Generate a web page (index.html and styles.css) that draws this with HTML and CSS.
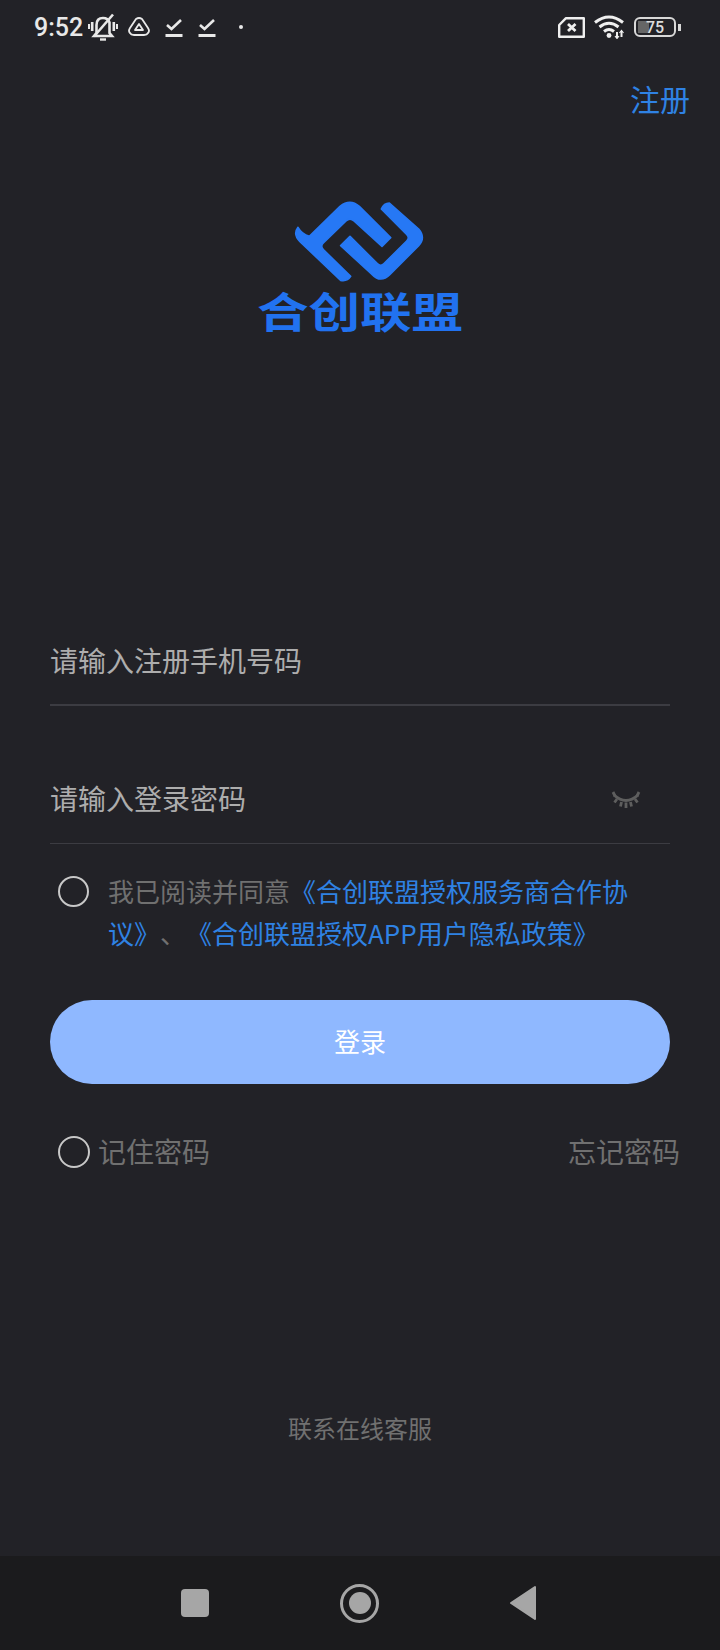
FILE: index.html
```html
<!DOCTYPE html>
<html lang="zh-CN">
<head>
    <meta charset="UTF-8">
    <meta name="viewport" content="width=device-width, initial-scale=1.0">
    <title>合创联盟</title>
    <link rel="stylesheet" href="styles.css">
</head>
<body>
    <div class="app">
        <div class="status-bar">
            <div class="status-left">
                <span class="time">9:52</span>
                <svg class="icon-bell" width="30" height="28" viewBox="0 0 30 28" fill="none" stroke="#e8e8e8" stroke-width="2.6">
                    <path d="M8.5 20 L8.5 12 Q8.5 5 15 5 Q20 5 21.5 9.5 L21.5 20 L24 23 L6 23 Z"/>
                    <path d="M12 26.5 L18 26.5" stroke-width="2.4"/>
                    <path d="M6 23.5 L25 1.5"/>
                    <path d="M4.2 9 V18 M25.8 9 V18" stroke-width="2.6"/>
                    <path d="M1 11 V16 M29 11 V16" stroke-width="2"/>
                </svg>
                <svg class="icon-tri" width="22" height="20" viewBox="0 0 22 20" fill="none" stroke="#e8e8e8" stroke-width="1.8" stroke-linejoin="round">
                    <path d="M8 2 Q11 0 14 2 L20 11 Q22 14 20 16 Q19 18 16 18 H6 Q3 18 2 16 Q0 14 2 11 Z"/>
                    <path d="M11 7 L15 13 H7 Z"/>
                </svg>
                <svg class="icon-check" width="18" height="20" viewBox="0 0 18 20" fill="none" stroke="#e8e8e8" stroke-width="2.6">
                    <path d="M2 8 L6.5 12 L16 3"/>
                    <path d="M0.5 18.5 H17.5" stroke-width="3"/>
                </svg>
                <svg class="icon-check" width="18" height="20" viewBox="0 0 18 20" fill="none" stroke="#e8e8e8" stroke-width="2.6">
                    <path d="M2 8 L6.5 12 L16 3"/>
                    <path d="M0.5 18.5 H17.5" stroke-width="3"/>
                </svg>
                <span class="status-dot"></span>
            </div>
            <div class="status-right">
                <svg width="27" height="21" viewBox="0 0 27 21" fill="none" stroke="#efefef" stroke-width="2.4" stroke-linejoin="round">
                    <path d="M8 1.2 H25.8 V19.8 H1.2 V8 Z"/>
                    <path d="M10 7 L17.5 14 M17.5 7 L10 14" stroke-width="2.8"/>
                </svg>
                <svg width="31" height="24" viewBox="0 0 31 24" fill="none" stroke="#efefef" stroke-width="3">
                    <path d="M1 7.5 Q15 -3.5 29 7.5"/>
                    <path d="M5.5 12 Q15 4.5 24.5 12"/>
                    <path d="M10 16.5 Q15 12.5 20 16.5"/>
                    <circle cx="15" cy="20.5" r="2.4" fill="#efefef" stroke="none"/>
                    <path d="M23 17 V23 M27.5 16 V22" stroke-width="2"/>
                    <path d="M21 21 L23 23.5 L25 21 M25.5 18 L27.5 15.5 L29.5 18" stroke-width="1.2"/>
                </svg>
                <div class="battery">
                    <div class="battery-body">
                        <span class="battery-fill"></span>
                        <span class="battery-num">75</span>
                    </div>
                    <span class="battery-tip"></span>
                </div>
            </div>
        </div>

        <div class="top-link"><a href="#">注册</a></div>

        <div class="logo">
            <svg width="140" height="90" viewBox="0 0 420 270" fill="#2678f5" stroke="#2678f5" stroke-width="5" stroke-linejoin="round">
                <path d="M24 97 Q35 117 58 124 L150 34 Q180 10 208 34 L302 128 L276 154 L192 78 Q180 66 168 78 L100 144 Q90 154 100 164 L182 244 Q172 260 152 256 L30 140 Q8 118 24 97 Z"/>
                <path d="M152 152 L180 124 L262 206 Q272 216 282 206 L350 138 Q360 128 350 118 L274 42 Q282 24 298 24 L386 102 Q408 128 386 152 L300 238 Q272 266 246 238 Z"/>
            </svg>
            <div class="logo-name">合创联盟</div>
        </div>

        <div class="form">
            <div class="field field-phone">
                <span>请输入注册手机号码</span>
            </div>
            <div class="field field-pass">
                <span>请输入登录密码</span>
                <svg class="eye" width="30" height="18" viewBox="0 0 30 18" fill="none" stroke="#5e5e5e" stroke-width="3">
                    <path d="M3 4 Q15 15 27 4"/>
                    <path d="M2 1 L4 5 M28 1 L26 5 M6 8 L3.5 11.5 M24 8 L26.5 11.5 M10.5 11 L9.5 15.5 M19.5 11 L20.5 15.5 M15 11.5 V17" stroke-width="2.8"/>
                </svg>
            </div>

            <div class="agree">
                <span class="radio"></span>
                <p>我已阅读并同意<a href="#">《合创联盟授权服务商合作协议》</a><span class="sep">、</span><a href="#">《合创联盟授权APP用户隐私政策》</a></p>
            </div>

            <button class="login-btn">登录</button>

            <div class="remember-row">
                <div class="remember">
                    <span class="radio radio-big"></span>
                    <span>记住密码</span>
                </div>
                <span class="forgot">忘记密码</span>
            </div>
        </div>

        <div class="service">联系在线客服</div>

        <div class="nav-bar">
            <span class="nav-square"></span>
            <span class="nav-home"><span></span></span>
            <svg width="28" height="36" viewBox="0 0 28 36" fill="#a6a6a6" stroke="#a6a6a6" stroke-width="2" stroke-linejoin="round">
                <path d="M2 18 L26 2 V34 Z"/>
            </svg>
        </div>
    </div>
</body>
</html>
```

FILE: styles.css
```css
* {
    box-sizing: border-box;
}

body {
    margin: 0;
    font-family: "Noto Sans CJK SC", "Noto Sans", sans-serif;
    background-color: #222227;
}

a {
    color: #2f82e4;
    text-decoration: none;
}

.app {
    width: 720px;
    height: 1650px;
    display: flex;
    flex-direction: column;
    overflow: hidden;
}

/* status bar */
.status-bar {
    height: 54px;
    padding: 0 39px 0 34px;
    display: flex;
    justify-content: space-between;
    align-items: center;
}

.status-left, .status-right {
    display: flex;
    align-items: center;
}

.time {
    font-family: Roboto, sans-serif;
    font-size: 25px;
    font-weight: 500;
    color: #e8e8e8;
    width: 54px;
}

.icon-tri {
    margin-left: 10px;
}

.icon-check {
    margin-left: 15px;
}

.status-dot {
    width: 4px;
    height: 4px;
    margin-left: 23px;
    border-radius: 50%;
    background-color: #e8e8e8;
}

.status-right {
    gap: 9px;
}

.battery {
    display: flex;
    align-items: center;
    gap: 2px;
}

.battery-body {
    position: relative;
    width: 42px;
    height: 20px;
    border: 2px solid #d8d8d8;
    border-radius: 6px;
    display: flex;
    align-items: center;
    justify-content: center;
}

.battery-fill {
    position: absolute;
    left: 2px;
    top: 2px;
    bottom: 2px;
    width: 11px;
    background-color: #666666;
}

.battery-num {
    position: relative;
    font-family: Roboto, sans-serif;
    font-size: 16px;
    font-weight: 500;
    color: #dcdcdc;
}

.battery-tip {
    width: 3px;
    height: 7px;
    background-color: #d8d8d8;
}

/* top link */
.top-link {
    height: 92px;
    padding-right: 30px;
    text-align: right;
    font-size: 30px;
    line-height: 88px;
}

/* logo */
.logo {
    height: 200px;
    display: flex;
    flex-direction: column;
    align-items: center;
    padding-top: 49px;
}

.logo-name {
    font-size: 50px;
    font-weight: 700;
    line-height: 50px;
    color: #2172f0;
    margin-top: 0;
    transform: scale(1.03, 0.84);
}

/* form */
.form {
    margin-top: 273px;
    padding: 0 50px;
}

.field {
    height: 87px;
    display: flex;
    align-items: center;
    justify-content: space-between;
    font-size: 28px;
    color: #adadad;
}

.field span {
    margin-top: -4px;
}

.field-phone {
    border-bottom: 2px solid #3c3c42;
}

.field-pass {
    margin-top: 51px;
    border-bottom: 1px solid #3c3c42;
}

.eye {
    margin-right: 29px;
}

.agree {
    margin-top: 26px;
    padding-left: 8px;
    display: flex;
    gap: 19px;
}

.agree p {
    margin: 0;
    width: 530px;
    font-size: 26px;
    line-height: 42px;
    color: #707070;
}

.sep {
    margin: 0 13px;
}

.radio {
    flex: none;
    width: 31px;
    height: 31px;
    margin-top: 6px;
    border: 2px solid #c8c8c8;
    border-radius: 50%;
}

.login-btn {
    display: block;
    width: 620px;
    height: 84px;
    margin-top: 46px;
    padding: 0 0 3px;
    border: none;
    border-radius: 42px;
    background-color: #8fb8ff;
    color: white;
    font-family: inherit;
    font-size: 26px;
}

.remember-row {
    margin-top: 47px;
    margin-right: -10px;
    display: flex;
    justify-content: space-between;
    align-items: center;
    font-size: 28px;
    color: #707070;
}

.remember {
    display: flex;
    align-items: center;
    gap: 8px;
    padding-left: 8px;
}

.radio-big {
    width: 32px;
    height: 32px;
    margin-top: 1px;
}

.service {
    margin-top: 239px;
    text-align: center;
    font-size: 24px;
    color: #707070;
}

/* bottom nav */
.nav-bar {
    margin-top: auto;
    height: 94px;
    padding-left: 181px;
    background-color: #1b1b1d;
    display: flex;
    align-items: center;
}

.nav-square {
    width: 28px;
    height: 28px;
    border-radius: 4px;
    background-color: #a6a6a6;
}

.nav-home {
    width: 39px;
    height: 39px;
    margin-left: 131px;
    margin-right: 130px;
    border: 3px solid #a6a6a6;
    border-radius: 50%;
    display: flex;
    align-items: center;
    justify-content: center;
}

.nav-home span {
    width: 22px;
    height: 22px;
    border-radius: 50%;
    background-color: #a6a6a6;
}
```
